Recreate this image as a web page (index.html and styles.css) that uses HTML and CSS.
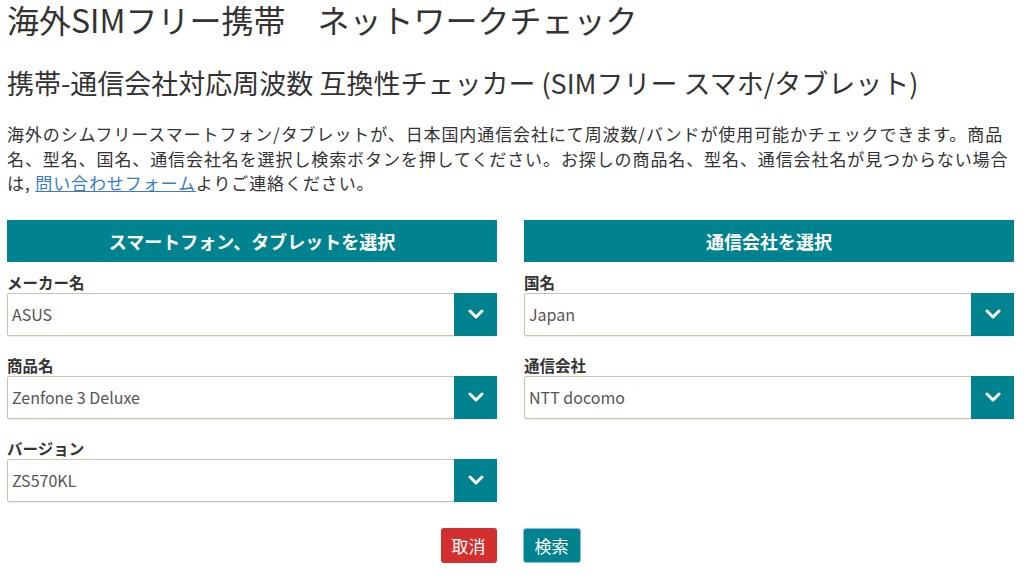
FILE: index.html
```html
<!DOCTYPE html>
<html lang="ja">
<head>
    <meta charset="UTF-8">
    <title>海外SIMフリー携帯 ネットワークチェック</title>
    <link rel="stylesheet" href="styles.css">
</head>
<body>
    <div class="page">
        <h1 class="title">海外SIMフリー携帯　ネットワークチェック</h1>
        <h2 class="subtitle">携帯-通信会社対応周波数 互換性チェッカー (SIMフリー スマホ/タブレット)</h2>
        <p class="intro">海外のシムフリースマートフォン/タブレットが、日本国内通信会社にて周波数/バンドが使用可能かチェックできます。商品名、型名、国名、通信会社名を選択し検索ボタンを押してください。お探しの商品名、型名、通信会社名が見つからない場合は, <a href="#">問い合わせフォーム</a>よりご連絡ください。</p>

        <div class="columns">
            <div class="column">
                <div class="column-head">スマートフォン、タブレットを選択</div>
                <div class="field">
                    <label>メーカー名</label>
                    <div class="select">
                        <span class="select-value">ASUS</span>
                        <span class="select-btn"><svg width="16" height="10" viewBox="0 0 16 10"><path d="M2 2 L8 8 L14 2" fill="none" stroke="#fff" stroke-width="3" stroke-linecap="round" stroke-linejoin="round"/></svg></span>
                    </div>
                </div>
                <div class="field">
                    <label>商品名</label>
                    <div class="select">
                        <span class="select-value">Zenfone 3 Deluxe</span>
                        <span class="select-btn"><svg width="16" height="10" viewBox="0 0 16 10"><path d="M2 2 L8 8 L14 2" fill="none" stroke="#fff" stroke-width="3" stroke-linecap="round" stroke-linejoin="round"/></svg></span>
                    </div>
                </div>
                <div class="field">
                    <label>バージョン</label>
                    <div class="select">
                        <span class="select-value">ZS570KL</span>
                        <span class="select-btn"><svg width="16" height="10" viewBox="0 0 16 10"><path d="M2 2 L8 8 L14 2" fill="none" stroke="#fff" stroke-width="3" stroke-linecap="round" stroke-linejoin="round"/></svg></span>
                    </div>
                </div>
            </div>
            <div class="column">
                <div class="column-head">通信会社を選択</div>
                <div class="field">
                    <label>国名</label>
                    <div class="select">
                        <span class="select-value">Japan</span>
                        <span class="select-btn"><svg width="16" height="10" viewBox="0 0 16 10"><path d="M2 2 L8 8 L14 2" fill="none" stroke="#fff" stroke-width="3" stroke-linecap="round" stroke-linejoin="round"/></svg></span>
                    </div>
                </div>
                <div class="field">
                    <label>通信会社</label>
                    <div class="select">
                        <span class="select-value">NTT docomo</span>
                        <span class="select-btn"><svg width="16" height="10" viewBox="0 0 16 10"><path d="M2 2 L8 8 L14 2" fill="none" stroke="#fff" stroke-width="3" stroke-linecap="round" stroke-linejoin="round"/></svg></span>
                    </div>
                </div>
            </div>
        </div>

        <div class="actions">
            <button class="btn btn-cancel">取消</button>
            <button class="btn btn-search">検索</button>
        </div>
    </div>
</body>
</html>
```

FILE: styles.css
```css
body {
    margin: 0;
    font-family: "Noto Sans CJK JP", sans-serif;
    color: #333;
    background-color: #fff;
}

.page {
    padding: 0 10px 0 7px;
}

.title {
    margin: 0;
    font-size: 32px;
    font-weight: normal;
    line-height: 38px;
    white-space: nowrap;
}

.subtitle {
    margin: 26px 0 0;
    font-size: 27px;
    font-weight: normal;
    line-height: 38px;
}

.intro {
    margin: 20px 0 0;
    font-size: 17px;
    letter-spacing: 0.9px;
    line-height: 24.5px;
}

.intro a {
    color: #3a7cc2;
    text-decoration: underline;
}

.columns {
    display: flex;
    gap: 27px;
    margin-top: 24px;
}

.column {
    width: 490px;
}

.column-head {
    height: 42px;
    background-color: #00838f;
    color: #fff;
    font-size: 18px;
    font-weight: bold;
    display: flex;
    align-items: center;
    justify-content: center;
}

.field {
    margin-top: 9px;
}

.field + .field {
    margin-top: 18px;
}

.field label {
    display: block;
    font-size: 15.5px;
    font-weight: bold;
    line-height: 22px;
}

.select {
    display: flex;
    height: 43px;
    border: 1px solid #cbc4ac;
    border-radius: 2px;
    box-sizing: border-box;
    box-shadow: 0 1px 1px rgba(0,0,0,0.08);
    background-color: #fff;
}

.select-value {
    flex: 1;
    display: flex;
    align-items: center;
    padding-left: 4px;
    font-size: 16px;
    color: #555;
}

.select-btn {
    width: 43px;
    background-color: #00838f;
    display: flex;
    align-items: center;
    justify-content: center;
    margin: -1px -1px -1px 0;
}

.actions {
    display: flex;
    justify-content: center;
    gap: 26px;
    margin-top: 26px;
}

.btn {
    font-family: "Noto Sans CJK JP", sans-serif;
    font-size: 17px;
    color: #fff;
    border: none;
    border-radius: 3px;
    height: 35px;
    padding: 0 11px;
    cursor: pointer;
}

.btn-cancel {
    background-color: #d32f2f;
}

.btn-search {
    background-color: #00838f;
    border: 1px solid #8ab8f0;
}
```
